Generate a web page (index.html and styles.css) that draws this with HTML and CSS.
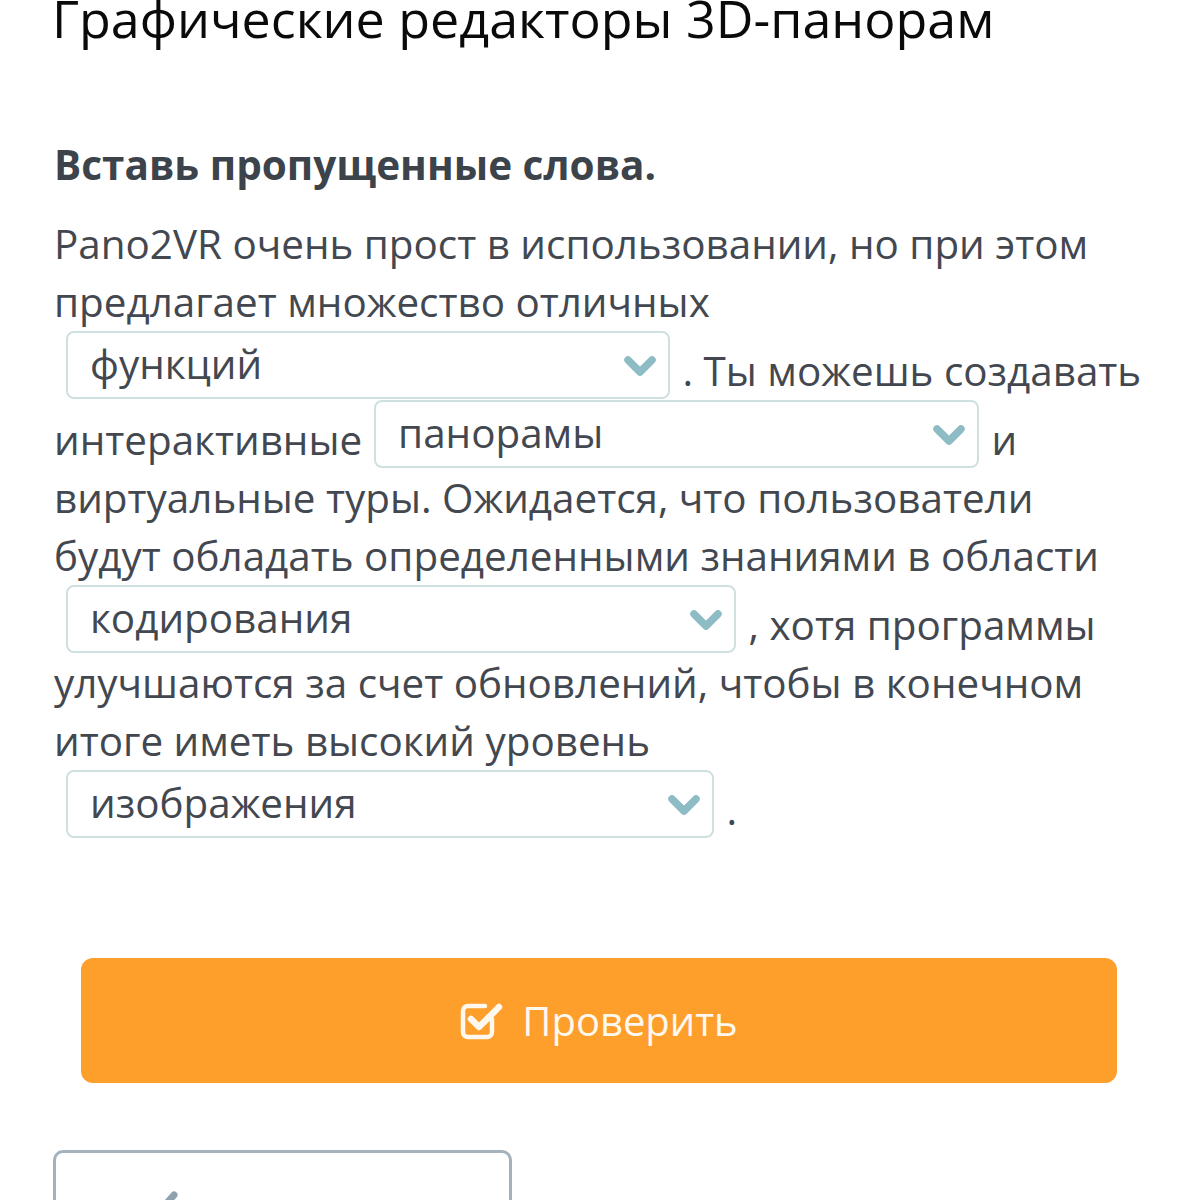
FILE: index.html
```html
<!DOCTYPE html>
<html lang="ru">
<head>
<meta charset="utf-8">
<title>Графические редакторы 3D-панорам</title>
<link rel="stylesheet" href="styles.css">
</head>
<body>
<main class="page">
  <h1 class="title">Графические редакторы 3D-панорам</h1>
  <h2 class="task">Вставь пропущенные слова.</h2>
  <p class="text">Pano2VR очень прост в использовании, но при этом предлагает множество отличных<span class="drop w1"><span class="drop-val">функций</span><svg class="chev" viewBox="0 0 32 22"><path d="M4 4 L16 16 L28 4" /></svg></span> . Ты можешь создавать интерактивные<span class="drop w2"><span class="drop-val">панорамы</span><svg class="chev" viewBox="0 0 32 22"><path d="M4 4 L16 16 L28 4" /></svg></span> и виртуальные туры. Ожидается, что пользователи будут обладать определенными знаниями в области<span class="drop w3"><span class="drop-val">кодирования</span><svg class="chev" viewBox="0 0 32 22"><path d="M4 4 L16 16 L28 4" /></svg></span> , хотя программы улучшаются за счет обновлений, чтобы в конечном итоге иметь высокий уровень<span class="drop w4"><span class="drop-val">изображения</span><svg class="chev" viewBox="0 0 32 22"><path d="M4 4 L16 16 L28 4" /></svg></span> .</p>
  <div class="actions">
    <button class="check-btn" type="button">
      <svg class="check-ico" viewBox="0 0 44 42"><path class="box" d="M32 20 V33 a5 5 0 0 1 -5 5 H8 a5 5 0 0 1 -5 -5 V12 a5 5 0 0 1 5 -5 H25" /><path class="tick" d="M11 20 L19 28 L39 8" /></svg>
      <span>Проверить</span>
    </button>
  </div>
  <div class="nav">
    <div class="nav-btn">
      <svg class="nav-ico" viewBox="0 0 30 40"><path d="M22 4 L8 20 L22 36" /></svg>
      <span class="nav-text">Назад</span>
    </div>
  </div>
</main>
</body>
</html>
```
FILE: styles.css
```css
html, body {
  margin: 0;
  padding: 0;
  background: #ffffff;
}
body {
  font-family: "Open Sans", "Noto Sans", sans-serif;
  color: #41464d;
  overflow: hidden;
  height: 1200px;
}
.page {
  padding: 0 54px 0 54px;
}
.title {
  margin: -16px 0 0 -2px;
  font-size: 52px;
  font-weight: 400;
  line-height: 68px;
  color: #0a0a0a;
}
.task {
  margin: 87px 0 0 0;
  font-size: 40.5px;
  font-weight: 700;
  line-height: 52px;
  color: #3d434a;
}
.text {
  margin: 24px 0 0 0;
  font-size: 40.4px;
  line-height: 58px;
  color: #434850;
}
.drop {
  display: inline-block;
  box-sizing: border-box;
  position: relative;
  height: 68px;
  margin: 0 2px 0 12px;
  border: 2px solid #cfe0e1;
  border-radius: 8px;
  overflow: hidden;
  vertical-align: -13px;
  background: #fff;
}
.w1 { width: 604px; }
.w2 { width: 605px; }
.w3 { width: 670px; }
.w4 { width: 648px; }
.drop-val {
  display: block;
  padding: 0 0 0 22px;
  line-height: 62px;
}
.chev {
  position: absolute;
  right: 12px;
  top: 23px;
  width: 32px;
  height: 22px;
}
.chev path {
  fill: none;
  stroke: #8dbcc4;
  stroke-width: 7.5;
  stroke-linecap: round;
  stroke-linejoin: round;
}
.actions {
  padding: 119px 29px 0 27px;
}
.check-btn {
  display: flex;
  align-items: center;
  justify-content: center;
  gap: 18px;
  width: 100%;
  height: 125px;
  border: none;
  border-radius: 12px;
  background: #fe9e2b;
  color: #fff8ee;
  font-family: "Open Sans", "Noto Sans", sans-serif;
  font-size: 40px;
  padding: 0;
}
.check-ico {
  width: 44px;
  height: 42px;
  margin-top: -2px;
}
.check-ico path {
  fill: none;
  stroke: #fff8ee;
  stroke-linecap: round;
  stroke-linejoin: round;
}
.check-ico .box { stroke-width: 4.5; }
.check-ico .tick { stroke-width: 6.5; }
.nav {
  padding-top: 67px;
}
.nav-btn {
  box-sizing: border-box;
  width: 459px;
  height: 120px;
  margin-left: -1px;
  border: 3px solid #a3b2bc;
  border-radius: 10px;
  display: flex;
  align-items: flex-start;
  padding: 38px 0 0 96px;
  gap: 140px;
}
.nav-ico {
  width: 30px;
  height: 40px;
}
.nav-ico path {
  fill: none;
  stroke: #8ea2ae;
  stroke-width: 7;
  stroke-linecap: round;
  stroke-linejoin: round;
}
.nav-text {
  font-size: 40px;
  color: #c5ccd2;
  line-height: 50px;
}
```
